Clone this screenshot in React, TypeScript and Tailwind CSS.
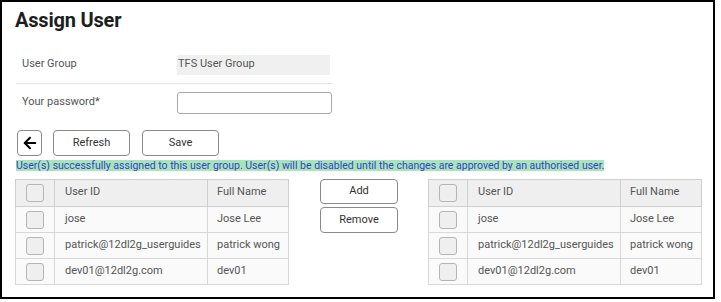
import { ArrowLeft } from "lucide-react";

const users = [
  { id: "jose", name: "Jose Lee" },
  { id: "patrick@12dl2g_userguides", name: "patrick wong" },
  { id: "dev01@12dl2g.com", name: "dev01" },
];

function Box() {
  return <div className="w-[18px] h-[18px] rounded-[3px] border border-[#b5b5b5] bg-[#efefef] mx-auto" />;
}

function UserTable() {
  return (
    <table className="border-collapse w-[274px] text-[11px] text-[#555] table-fixed">
      <colgroup>
        <col className="w-[39px]" />
        <col className="w-[153px]" />
        <col />
      </colgroup>
      <thead>
        <tr className="h-[27px] bg-[#efefef]">
          <th className="border border-[#cfcfcf] align-top pt-[4px]"><Box /></th>
          <th className="border border-[#cfcfcf] text-left font-normal align-top pt-[4px] pl-[10px]">User ID</th>
          <th className="border border-[#cfcfcf] text-left font-normal align-top pt-[4px] pl-[9px]">Full Name</th>
        </tr>
      </thead>
      <tbody>
        {users.map((u) => (
          <tr key={u.id} className="h-[26px] bg-[#fafafa]">
            <td className="border border-[#d8d8d8]"><Box /></td>
            <td className="border border-[#d8d8d8] pl-[10px]">{u.id}</td>
            <td className="border border-[#d8d8d8] pl-[9px]">{u.name}</td>
          </tr>
        ))}
      </tbody>
    </table>
  );
}

export default function App() {
  return (
    <div className="bg-white w-[721px] h-[302px] font-['Roboto',sans-serif]">
      <div className="w-[715px] h-[299px] border-2 border-black pl-[13px] pt-[6px]">
        <h1 className="text-[20px] leading-[24px] font-bold text-[#1e1e1e] tracking-[-0.2px]">Assign User</h1>

        {/* form */}
        <div className="w-[317px] ml-[1px] mt-[14px] text-[11px] text-[#555]">
          <div className="flex items-center h-[38px] border-b border-[#e6e6e6]">
            <div className="w-[161px] pl-[6px]">User Group</div>
            <div className="w-[153px] h-[20px] bg-[#f0f0f0] flex items-center pl-[1px]">TFS User Group</div>
          </div>
          <div className="flex items-center h-[37px]">
            <div className="w-[161px] pl-[6px]">Your password*</div>
            <input className="w-[155px] h-[22px] border border-[#a8a8a8] rounded-[3px] bg-white" />
          </div>
        </div>

        {/* actions */}
        <div className="flex gap-[12px] mt-[9px] ml-[2px] text-[11px] text-[#333]">
          <button className="w-[25px] h-[26px] border border-[#8a8a8a] rounded-[4px] flex items-center justify-center text-black">
            <ArrowLeft size={18} strokeWidth={2.6} />
          </button>
          <button className="w-[77px] h-[26px] border border-[#8a8a8a] rounded-[4px] -ml-[1px]">Refresh</button>
          <button className="w-[77px] h-[26px] border border-[#8a8a8a] rounded-[4px]">Save</button>
        </div>

        <div className="mt-[4px] ml-[1px] w-fit bg-[#a6e6b6] text-[#3a3ad6] text-[10.5px] leading-[11px]">
          User(s) successfully assigned to this user group. User(s) will be disabled until the changes are approved by an authorised user.
        </div>

        {/* tables */}
        <div className="flex mt-[8px]">
          <UserTable />
          <div className="flex flex-col gap-[3px] ml-[31px] mr-[30px] text-[11px] text-[#333]">
            <button className="w-[78px] h-[25px] border border-[#8a8a8a] rounded-[4px]">Add</button>
            <button className="w-[78px] h-[26px] border border-[#8a8a8a] rounded-[4px]">Remove</button>
          </div>
          <UserTable />
        </div>
      </div>
    </div>
  );
}
